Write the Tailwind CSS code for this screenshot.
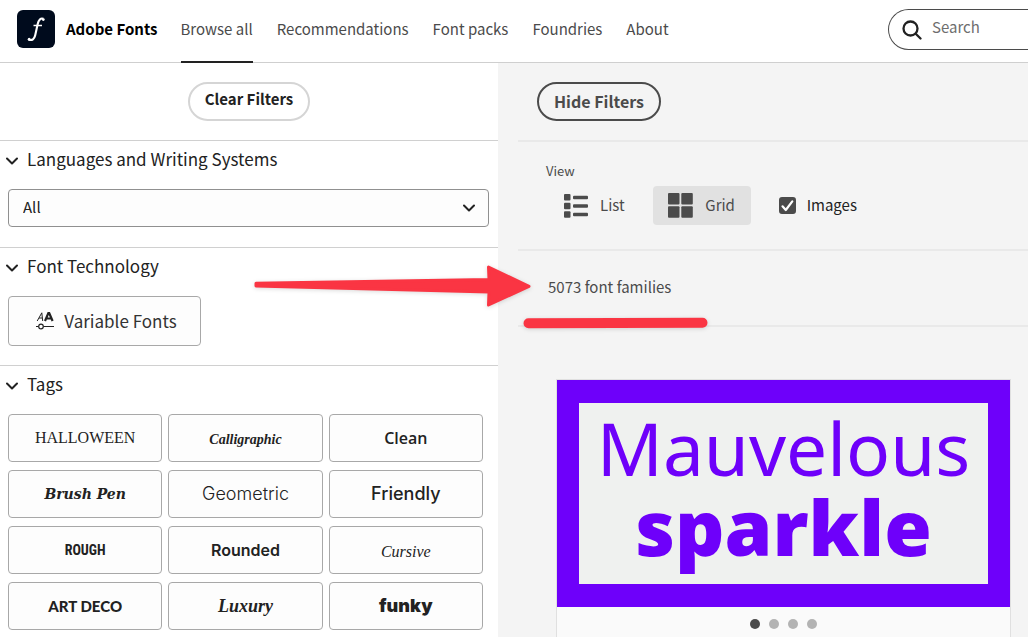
<!DOCTYPE html>
<html lang="en">
<head>
<meta charset="utf-8">
<meta name="viewport" content="width=device-width, initial-scale=1">
<title>Adobe Fonts</title>
<script src="https://cdn.jsdelivr.net/npm/@tailwindcss/browser@4"></script>
</head>
<body class="relative flex h-screen flex-col overflow-hidden bg-white font-['Noto_Sans_CJK_SC',sans-serif] text-[15px] text-[#222]">
<header class="flex h-[63px] shrink-0 items-stretch border-b border-[#cfcfcf] pl-4">
  <a href="#" class="flex items-center gap-2.5 pb-1 font-bold text-black">
    <svg class="size-10" viewBox="0 0 40 40" aria-hidden="true">
      <rect x="1" y="1" width="38" height="38" rx="6" fill="#000b1d"/>
      <path d="M27.300 9.800C24.700 8.600 22.600 11 21.700 15L19.200 26.300C18.300 30.200 16.200 31.700 12.800 30.700" fill="none" stroke="#fff" stroke-width="2.100"/>
      <circle cx="27.300" cy="10.600" r="1.400" fill="#fff"/><circle cx="13.200" cy="30.200" r="1.500" fill="#fff"/>
      <path d="M17.500 16.500H26" stroke="#fff" stroke-width="1.500"/>
    </svg>
    <span>Adobe Fonts</span>
  </a>
  <nav class="ml-[23px] flex items-stretch gap-6 whitespace-nowrap text-[#4b4b4b]">
    <a href="#" class="-mb-px flex items-center border-b-2 border-[#222] pb-[3px]">Browse all</a>
    <a href="#" class="flex items-center pb-1">Recommendations</a>
    <a href="#" class="flex items-center pb-1">Font packs</a>
    <a href="#" class="flex items-center pb-1">Foundries</a>
    <a href="#" class="flex items-center pb-1">About</a>
  </nav>
  <label class="ml-auto mt-[9px] flex h-[41px] w-[140px] items-center gap-2.5 rounded-l-full border border-r-0 border-[#4b4b4b] pl-[13px]">
    <svg class="size-5 shrink-0" viewBox="0 0 20 20" fill="none" stroke="#222" stroke-width="2.300" stroke-linecap="round" aria-hidden="true"><circle cx="8.500" cy="8.500" r="7"/><path d="M13.700 13.700L18.500 18.500"/></svg>
    <input type="search" placeholder="Search" aria-label="Search" class="w-full min-w-0 bg-transparent pb-1 outline-none placeholder:text-[#6e6e6e]">
  </label>
</header>
<main class="flex min-h-0 flex-1">
  <aside class="w-[498px] shrink-0">
    <div class="flex justify-center pt-[19px] pb-[19px]">
      <button class="h-[39px] rounded-full border-2 border-[#d5d5d5] px-[15px] pb-1 font-bold">Clear Filters</button>
    </div>
    <section class="border-t border-[#d0d0d0] pr-[9px] pb-5 pl-2">
      <h2 class="-ml-2 flex h-9 items-center gap-[9px] pl-[6px] text-[17px]">
        <svg class="mt-1 h-3 w-3" viewBox="0 0 12 12" fill="none" stroke="#222" stroke-width="2" stroke-linecap="round" stroke-linejoin="round" aria-hidden="true"><path d="M1 3.500L6 8.500L11 3.500"/></svg>
        <label for="lang">Languages and Writing Systems</label>
      </h2>
      <div class="relative mt-3">
        <select id="lang" class="block h-[38px] w-full appearance-none rounded border border-[#909090] bg-[#fdfdfd] pb-0.5 pl-3.5"><option>All</option></select>
        <svg class="pointer-events-none absolute top-[13px] right-[14px] h-3 w-3" viewBox="0 0 12 12" fill="none" stroke="#222" stroke-width="2" stroke-linecap="round" stroke-linejoin="round" aria-hidden="true"><path d="M1 3.500L6 8.500L11 3.500"/></svg>
      </div>
    </section>
    <section class="border-t border-[#d0d0d0] pb-[19px] pl-2">
      <h2 class="-ml-2 flex h-9 items-center gap-[9px] pl-[6px] text-[17px]">
        <svg class="mt-1 h-3 w-3" viewBox="0 0 12 12" fill="none" stroke="#222" stroke-width="2" stroke-linecap="round" stroke-linejoin="round" aria-hidden="true"><path d="M1 3.500L6 8.500L11 3.500"/></svg>
        Font Technology
      </h2>
      <button class="mt-3 flex h-[50px] w-[193px] items-center justify-center gap-2.5 rounded border border-[#a8a8a8] bg-[#fdfdfd] pl-1 text-[17px] text-[#333]">
        <svg class="h-[18px] w-[18px]" viewBox="0 0 18 18" fill="none" stroke="#222" aria-hidden="true"><path d="M1.200 9L5.800 0.800L6.700 9M3 6H6.300" stroke-width="1"/><path d="M9 9L12.400 1H13.200L16.600 9M10.500 6.500H15" stroke-width="2.200"/><path d="M0 14.500H2.500M7.500 14.500H18"/><circle cx="5" cy="14.500" r="2.300" stroke-width="1.200"/></svg>
        <span>Variable Fonts</span>
      </button>
    </section>
    <section class="border-t border-[#d0d0d0] pr-[15px] pl-2">
      <h2 class="-ml-2 flex h-9 items-center gap-[9px] pl-[6px] text-[17px]">
        <svg class="mt-1 h-3 w-3" viewBox="0 0 12 12" fill="none" stroke="#222" stroke-width="2" stroke-linecap="round" stroke-linejoin="round" aria-hidden="true"><path d="M1 3.500L6 8.500L11 3.500"/></svg>
        Tags
      </h2>
      <div class="mt-3 grid auto-rows-[48px] grid-cols-3 gap-x-1.5 gap-y-2">
        <button class="rounded border border-[#a8a8a8] bg-[#fdfdfd] font-['Liberation_Serif',serif] text-base">HALLOWEEN</button>
        <button class="rounded border border-[#a8a8a8] bg-[#fdfdfd] pt-1 font-['Liberation_Serif',serif] text-sm font-bold italic">Calligraphic</button>
        <button class="rounded border border-[#a8a8a8] bg-[#fdfdfd] font-[Open_Sans,sans-serif] text-base font-semibold">Clean</button>
        <button class="rounded border border-[#a8a8a8] bg-[#fdfdfd] font-['DejaVu_Serif',serif] text-sm font-bold italic">Brush Pen</button>
        <button class="rounded border border-[#a8a8a8] bg-[#fdfdfd] font-[Inter,sans-serif] text-lg font-light">Geometric</button>
        <button class="rounded border border-[#a8a8a8] bg-[#fdfdfd] font-[Inter,sans-serif] text-lg font-medium">Friendly</button>
        <button class="rounded border border-[#a8a8a8] bg-[#fdfdfd] font-['Liberation_Sans_Narrow','Roboto_Condensed',Roboto,sans-serif] text-sm font-bold">ROUGH</button>
        <button class="rounded border border-[#a8a8a8] bg-[#fdfdfd] font-[Inter,sans-serif] text-base font-semibold">Rounded</button>
        <button class="rounded border border-[#a8a8a8] bg-[#fdfdfd] pt-1 font-['Liberation_Serif',serif] text-base italic">Cursive</button>
        <button class="rounded border border-[#a8a8a8] bg-[#fdfdfd] font-[Lato,sans-serif] text-[15px] font-black">ART DECO</button>
        <button class="rounded border border-[#a8a8a8] bg-[#fdfdfd] font-['Liberation_Serif',serif] text-lg font-bold italic">Luxury</button>
        <button class="rounded border border-[#a8a8a8] bg-[#fdfdfd] font-[Inter,sans-serif] text-lg font-black">funky</button>
      </div>
    </section>
  </aside>
  <div class="flex min-w-0 flex-1 flex-col bg-[#f4f4f4] pl-5 text-[#4b4b4b]">
    <div class="py-[19px] pl-[19px]">
      <button class="block h-[39px] rounded-full border-2 border-[#4b4b4b] px-[15px] pb-px text-base font-bold">Hide Filters</button>
    </div>
    <div class="h-[109px] border-t-2 border-[#e9e9e9] pt-[19px] pl-7">
      <p class="text-[13px]/5">View</p>
      <div class="mt-[5px] flex h-[39px] items-center">
        <button class="flex items-center gap-3 pl-[18px]">
          <svg class="size-6" viewBox="0 0 24 24" fill="#4b4b4b" aria-hidden="true"><rect y="0" width="6.500" height="6.500" rx="1"/><rect y="8.700" width="6.500" height="6.500" rx="1"/><rect y="17.300" width="6.500" height="6.500" rx="1"/><rect x="9" y="1.700" width="15" height="3.500" rx="1"/><rect x="9" y="10.200" width="15" height="3.500" rx="1"/><rect x="9" y="18.700" width="15" height="3.500" rx="1"/></svg>
          List
        </button>
        <button class="ml-7 flex h-[39px] w-[98px] items-center justify-center gap-3 rounded bg-[#e1e1e1]" aria-pressed="true">
          <svg class="size-[25px]" viewBox="0 0 25 25" fill="#4b4b4b" aria-hidden="true"><rect width="11.500" height="11.500" rx="1"/><rect x="13.300" width="11.500" height="11.500" rx="1"/><rect y="13.300" width="11.500" height="11.500" rx="1"/><rect x="13.300" y="13.300" width="11.500" height="11.500" rx="1"/></svg>
          Grid
        </button>
        <label class="ml-7 flex items-center gap-[11px] pb-px text-[#222]">
          <span class="relative size-[17px]">
            <input type="checkbox" checked class="block size-[17px] appearance-none rounded-[3px] border-2 border-[#4b4b4b] checked:bg-[#4b4b4b]">
            <svg class="pointer-events-none absolute inset-0" viewBox="0 0 17 17" fill="none" stroke="#fff" stroke-width="2.200" stroke-linecap="round" stroke-linejoin="round" aria-hidden="true"><path d="M3.500 9.300L6.800 13L13.300 4.300"/></svg>
          </span>
          Images
        </label>
      </div>
    </div>
    <div class="flex h-[76px] items-center border-t-2 border-[#e9e9e9] pb-px pl-[30px]">5073 font families</div>
    <div class="flex flex-1 border-t-2 border-[#e9e9e9] pt-[52px] pr-[17px] pl-[38px]">
      <article class="flex-1 border border-b-0 border-[#e0e0e0] bg-[#fafafa]">
        <p class="flex h-[227px] items-center justify-center border-[23px] border-x-[22px] border-[#6e00fa] bg-[#eff1ef] pb-3 text-center font-['Noto_Sans',sans-serif] text-[73px]/[79px] text-[#6e00fa]">
          <span>Mauvelous<br><b class="text-[77px]/[79px] font-black">sparkle</b></span>
        </p>
        <div class="flex justify-center gap-[9px] pt-3">
          <button aria-label="Sample 1" class="size-2.5 rounded-full bg-[#4b4b4b]"></button>
          <button aria-label="Sample 2" class="size-2.5 rounded-full bg-[#b3b3b3]"></button>
          <button aria-label="Sample 3" class="size-2.5 rounded-full bg-[#b3b3b3]"></button>
          <button aria-label="Sample 4" class="size-2.5 rounded-full bg-[#b3b3b3]"></button>
        </div>
      </article>
    </div>
  </div>
</main>
<!-- Arrow and underline that point out the family count -->
<svg class="pointer-events-none absolute top-[260px] left-[250px] h-[75px] w-[465px] drop-shadow-sm" viewBox="0 0 465 75" fill="#fa3543" stroke="#fa3543" stroke-linejoin="round" stroke-linecap="round" aria-hidden="true">
  <path d="M6 23.300L239 19.500L238.500 7L279 26.300L238.500 45L239 32L6 26Z" stroke-width="3"/>
  <path d="M278.500 63.200L452.500 62.700" stroke-width="10"/>
</svg>
</body>
</html>
